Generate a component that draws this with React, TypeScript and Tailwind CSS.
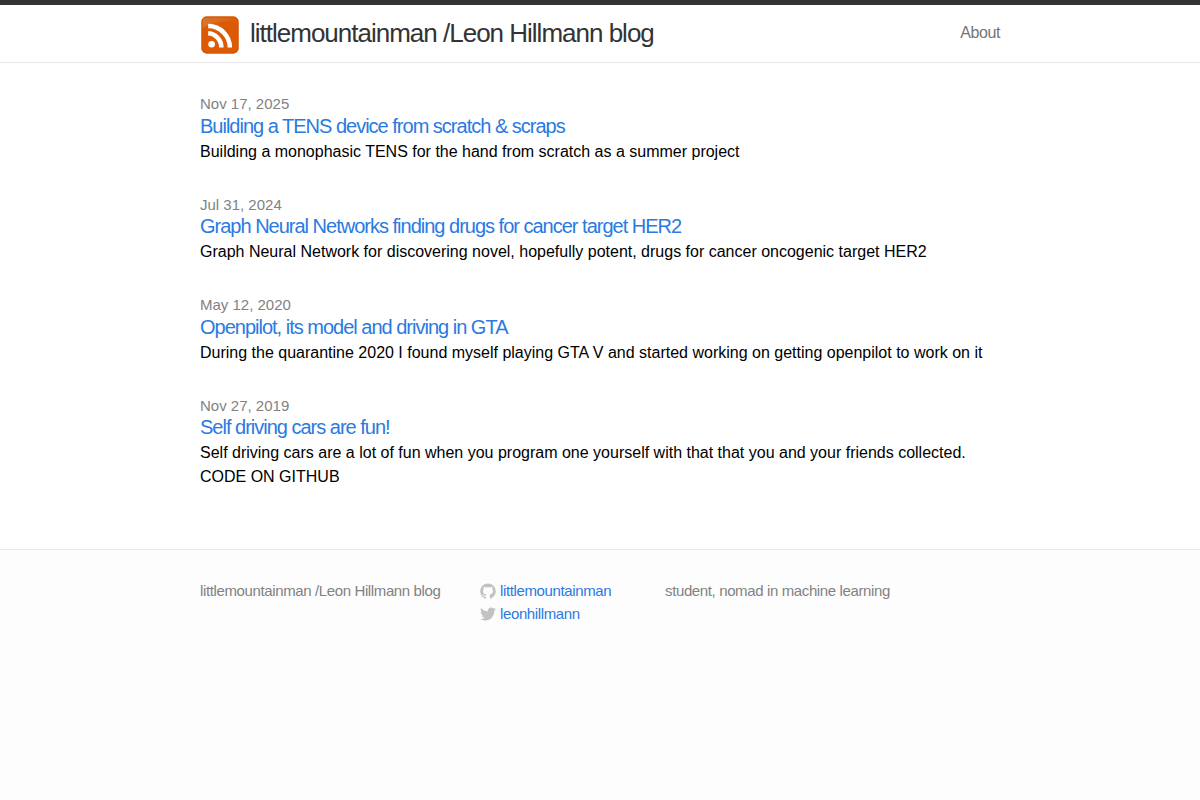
interface Post {
  date: string;
  title: string;
  excerpt: string;
}

const SITE_TITLE = "littlemountainman /Leon Hillmann blog";

const posts: Post[] = [
  {
    date: "Nov 17, 2025",
    title: "Building a TENS device from scratch & scraps",
    excerpt: "Building a monophasic TENS for the hand from scratch as a summer project",
  },
  {
    date: "Jul 31, 2024",
    title: "Graph Neural Networks finding drugs for cancer target HER2",
    excerpt:
      "Graph Neural Network for discovering novel, hopefully potent, drugs for cancer oncogenic target HER2",
  },
  {
    date: "May 12, 2020",
    title: "Openpilot, its model and driving in GTA",
    excerpt:
      "During the quarantine 2020 I found myself playing GTA V and started working on getting openpilot to work on it",
  },
  {
    date: "Nov 27, 2019",
    title: "Self driving cars are fun!",
    excerpt:
      "Self driving cars are a lot of fun when you program one yourself with that that you and your friends collected. CODE ON GITHUB",
  },
];

function FeedIcon() {
  return (
    <svg viewBox="0 0 40 40" className="size-10 shrink-0" aria-hidden="true">
      <defs>
        <linearGradient id="feed-gloss" x1="0" y1="0" x2="1" y2="0">
          <stop offset="0" stopColor="#d8752f" />
          <stop offset="0.5" stopColor="#d96a1c" />
          <stop offset="1" stopColor="#dd5a04" />
        </linearGradient>
      </defs>
      <rect x="1.5" y="1.5" width="37" height="37" rx="5" fill="#dd5a04" />
      <path d="M6.5 2.5h27a4 4 0 0 1 4 4C27 5 13 7 2.500 13V6.500a4 4 0 0 1 4-4z" fill="url(#feed-gloss)" />
      <rect x="2" y="2" width="36" height="36" rx="4.5" fill="none" stroke="#d35706" />
      <circle cx="11.6" cy="29.3" r="3.3" fill="#fff" />
      <path
        d="M8.2 18.2a14 14.400 0 0 1 13.200 14.400M8.200 11.100a21.500 21.500 0 0 1 21.700 21.500"
        fill="none"
        stroke="#fff"
        strokeWidth="4.5"
      />
    </svg>
  );
}

function GithubIcon() {
  return (
    <svg viewBox="0 0 16 16" className="size-4 shrink-0 fill-[#c2c2c2]" aria-hidden="true">
      <path d="M7.999,0.431c-4.285,0-7.76,3.474-7.76,7.761 c0,3.428,2.223,6.337,5.307,7.363c0.388,0.071,0.53-0.168,0.53-0.374c0-0.184-0.007-0.672-0.01-1.32 c-2.159,0.469-2.614-1.04-2.614-1.04c-0.353-0.896-0.862-1.135-0.862-1.135c-0.705-0.481,0.053-0.472,0.053-0.472 c0.779,0.055,1.189,0.8,1.189,0.8c0.692,1.186,1.816,0.843,2.258,0.645c0.071-0.502,0.271-0.843,0.493-1.037 C4.86,11.425,3.049,10.76,3.049,7.786c0-0.847,0.302-1.54,0.799-2.082C3.768,5.507,3.501,4.718,3.924,3.65 c0,0,0.652-0.209,2.134,0.796C6.677,4.273,7.34,4.187,8,4.184c0.659,0.003,1.323,0.089,1.943,0.261 c1.482-1.004,2.132-0.796,2.132-0.796c0.423,1.068,0.157,1.857,0.077,2.054c0.497,0.542,0.798,1.235,0.798,2.082 c0,2.981-1.814,3.637-3.543,3.829c0.279,0.24,0.527,0.713,0.527,1.437c0,1.037-0.01,1.874-0.01,2.129 c0,0.208,0.14,0.449,0.534,0.373c3.081-1.028,5.302-3.935,5.302-7.362C15.76,3.906,12.285,0.431,7.999,0.431z" />
    </svg>
  );
}

function TwitterIcon() {
  return (
    <svg viewBox="0 0 16 16" className="size-4 shrink-0 fill-[#c2c2c2]" aria-hidden="true">
      <path d="M15.969,3.058c-0.586,0.26-1.217,0.436-1.878,0.515c0.675-0.405,1.194-1.045,1.438-1.809c-0.632,0.375-1.332,0.647-2.076,0.793c-0.596-0.636-1.446-1.033-2.387-1.033c-1.806,0-3.27,1.464-3.27,3.27 c0,0.256,0.029,0.506,0.085,0.745C5.163,5.404,2.753,4.102,1.14,2.124C0.859,2.607,0.698,3.168,0.698,3.767 c0,1.134,0.577,2.135,1.455,2.722C1.616,6.472,1.112,6.325,0.671,6.08c0,0.014,0,0.027,0,0.041c0,1.584,1.127,2.906,2.623,3.206 C3.02,9.402,2.731,9.442,2.433,9.442c-0.211,0-0.416-0.021-0.615-0.059c0.416,1.299,1.624,2.245,3.055,2.271 c-1.119,0.877-2.529,1.4-4.061,1.4c-0.264,0-0.524-0.015-0.78-0.046c1.447,0.928,3.166,1.469,5.013,1.469 c6.015,0,9.304-4.983,9.304-9.304c0-0.142-0.003-0.283-0.009-0.423C14.976,4.29,15.531,3.714,15.969,3.058z" />
    </svg>
  );
}

export default function App() {
  return (
    <div className="flex min-h-screen flex-col bg-white font-['Liberation_Sans',Arial,sans-serif] text-base leading-normal text-black">
      <header className="border-t-[5px] border-b border-t-[#333] border-b-[#e8e8e8]">
        <div className="mx-auto flex max-w-[860px] items-start justify-between px-[30px] pt-2.5 pb-[7px] leading-9">
          <a href="#" className="flex items-start gap-2.5 text-[26px] leading-9 tracking-[-1px] text-[#333]">
            <FeedIcon />
            {SITE_TITLE}
          </a>
          <nav>
            <a href="#about" className="tracking-tight text-[#757575] hover:underline">
              About
            </a>
          </nav>
        </div>
      </header>

      <main className="mx-auto w-full max-w-[860px] px-[30px] py-[30px]">
        <ul>
          {posts.map((post) => (
            <li key={post.title} className="mb-[30px]">
              <p className="text-[15px] leading-normal text-[#828282]">{post.date}</p>
              <h2 className="mb-1 text-xl leading-5 tracking-[-1px]">
                <a href="#" className="text-[#2a7ae2] hover:underline">
                  {post.title}
                </a>
              </h2>
              <p>{post.excerpt}</p>
            </li>
          ))}
        </ul>
      </main>

      <footer className="flex-1 border-t border-[#e8e8e8] bg-[#fdfdfd]">
        <div className="mx-auto grid max-w-[860px] grid-cols-[280fr_185fr_335fr] px-[30px] py-[30px] text-[15px] leading-normal tracking-tight text-[#828282]">
          <p>{SITE_TITLE}</p>
          <ul>
            <li>
              <a href="#github" className="flex items-center gap-1 text-[#2a7ae2] hover:underline">
                <GithubIcon />
                littlemountainman
              </a>
            </li>
            <li>
              <a href="#twitter" className="flex items-center gap-1 text-[#2a7ae2] hover:underline">
                <TwitterIcon />
                leonhillmann
              </a>
            </li>
          </ul>
          <p>student, nomad in machine learning</p>
        </div>
      </footer>
    </div>
  );
}
